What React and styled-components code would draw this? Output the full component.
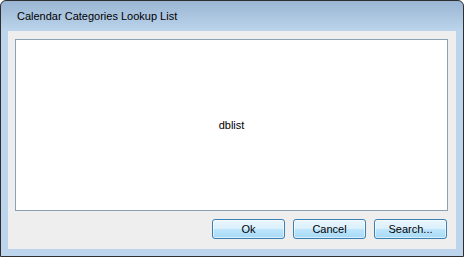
import React from "react";
import styled, { createGlobalStyle } from "styled-components";

const Global = createGlobalStyle`
  html, body { margin: 0; padding: 0; background: #ffffff; }
  body { font-family: "Liberation Sans", Arial, sans-serif; }
`;

const Window = styled.div`
  box-sizing: border-box;
  width: 464px;
  height: 257px;
  border: 1px solid #2e2e2e;
  border-radius: 6px 6px 0 0;
  background: linear-gradient(to bottom, #9ab6d3 0px, #bcd4ec 30px, #bcd4ec 100%);
  display: flex;
  flex-direction: column;
  overflow: hidden;
`;

const TitleBar = styled.div`
  height: 30px;
  flex: none;
  display: flex;
  align-items: center;
  padding-left: 16px;
  padding-bottom: 1px;
  box-sizing: border-box;
  font-family: "Liberation Sans", Arial, sans-serif;
  font-size: 11px;
  color: #000;
`;

const Client = styled.div`
  flex: 1;
  margin: 0 7px 7px 7px;
  background: #eeeeee;
  display: flex;
  flex-direction: column;
  padding: 8px 8px 10px 7px;
  box-sizing: border-box;
  gap: 8px;
`;

const ListBox = styled.div`
  flex: 1;
  background: #ffffff;
  border: 1px solid #8aa2b4;
  display: flex;
  align-items: center;
  justify-content: center;
  font-family: "Liberation Sans", Arial, sans-serif;
  font-size: 11px;
  color: #000;
`;

const ButtonRow = styled.div`
  display: flex;
  justify-content: flex-end;
  gap: 8px;
  padding-right: 1px;
`;

const Button = styled.button`
  box-sizing: border-box;
  width: 73px;
  height: 20px;
  margin: 0;
  padding: 0;
  border: 1px solid #3c7fb1;
  border-radius: 3px;
  background: linear-gradient(to bottom, #eaf6fd 0%, #d9f0fc 50%, #bee6fd 50%, #a7d9f5 100%);
  box-shadow: inset 0 0 0 1px rgba(255, 255, 255, 0.55);
  font-family: "Liberation Sans", Arial, sans-serif;
  font-size: 11px;
  color: #000;
  line-height: 18px;
`;

export default function App() {
  return (
    <>
      <Global />
      <Window>
        <TitleBar>Calendar Categories Lookup List</TitleBar>
        <Client>
          <ListBox>dblist</ListBox>
          <ButtonRow>
            <Button>Ok</Button>
            <Button>Cancel</Button>
            <Button>Search...</Button>
          </ButtonRow>
        </Client>
      </Window>
    </>
  );
}
